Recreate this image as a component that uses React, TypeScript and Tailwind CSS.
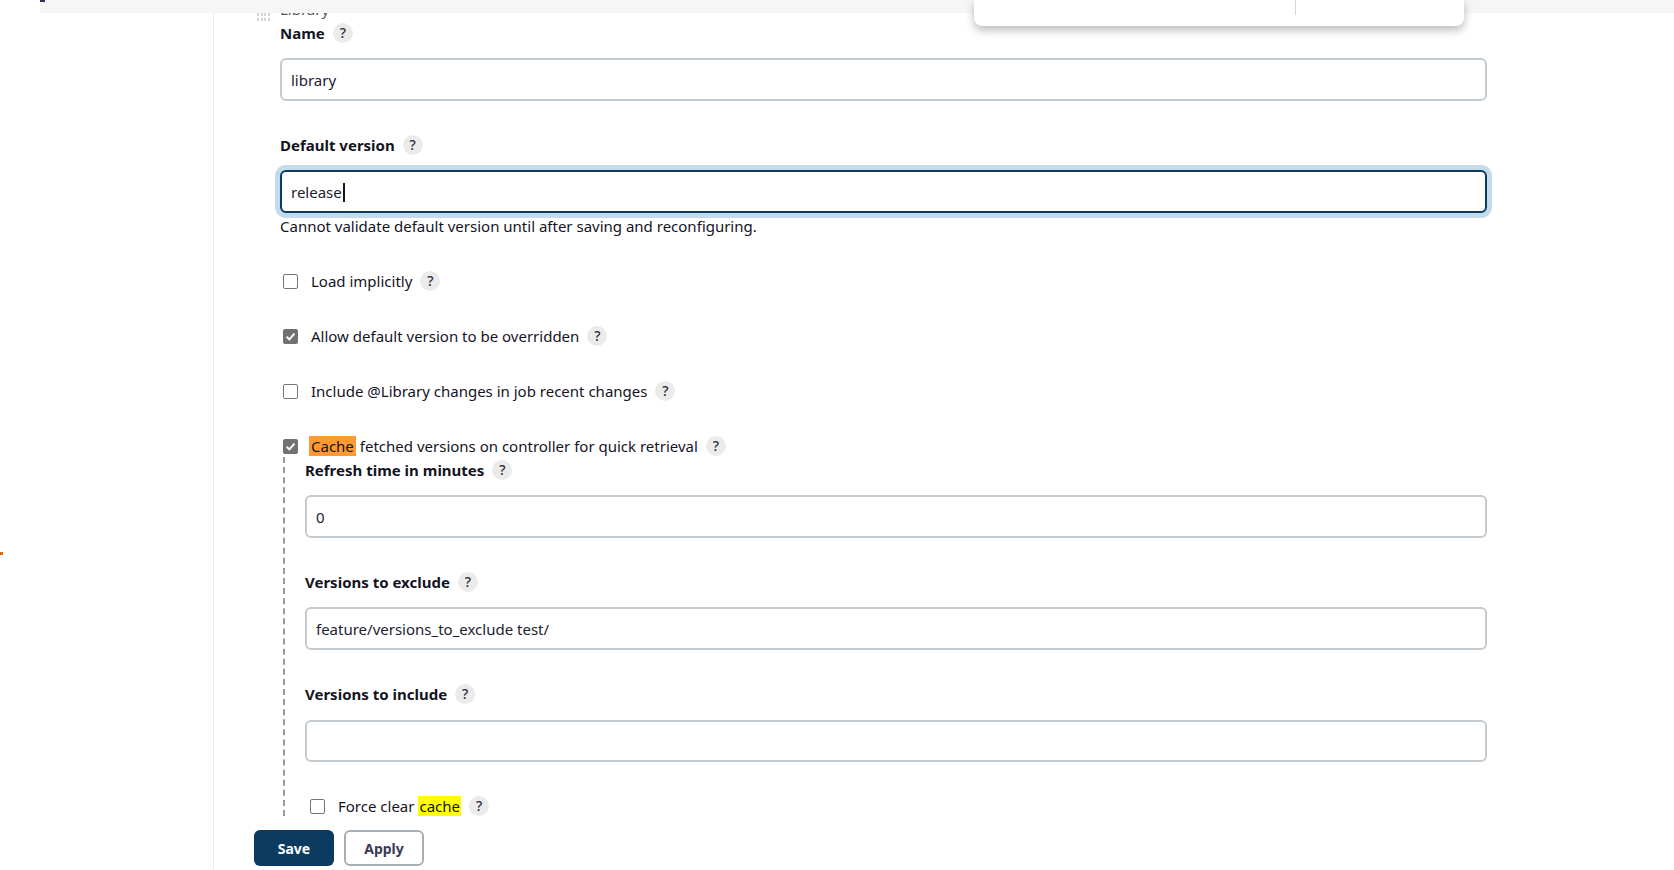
import { ReactNode } from "react";

function Help() {
    return (
        <span className="ml-[8px] inline-flex h-[20px] w-[20px] shrink-0 items-center justify-center rounded-full bg-[#ebebeb] text-[14px] font-medium leading-none text-[#2b2b3a]">
            ?
        </span>
    );
}

function Label({ children }: { children: ReactNode }) {
    return (
        <div className="flex h-[20px] items-center text-[15px] font-bold leading-[20px] text-[#14141f]">
            {children}
            <Help />
        </div>
    );
}

function TextInput({ value, height = "h-[43px]" }: { value: string; height?: string }) {
    return (
        <div
            className={`flex ${height} w-full items-center rounded-[6px] border-2 border-[#c3cbd0] bg-white px-[9px] pt-[2px] text-[15px] text-[#222230]`}
        >
            {value}
        </div>
    );
}

function Checkbox({ checked }: { checked?: boolean }) {
    if (checked) {
        return (
            <span className="flex h-[15px] w-[15px] shrink-0 items-center justify-center rounded-[2px] bg-[#717171]">
                <svg width="11" height="11" viewBox="0 0 10 10">
                    <path d="M1.5 5.2 L4 7.6 L8.6 2.4" fill="none" stroke="white" strokeWidth="1.8" />
                </svg>
            </span>
        );
    }
    return <span className="h-[15px] w-[15px] shrink-0 rounded-[2px] border-[1.5px] border-[#767676] bg-white" />;
}

function CheckRow({ checked, children }: { checked?: boolean; children: ReactNode }) {
    return (
        <div className="flex h-[20px] items-center text-[15px] leading-[20px] text-[#14141f]">
            <Checkbox checked={checked} />
            <span className="ml-[13px] flex items-center">{children}</span>
            <Help />
        </div>
    );
}

export default function App() {
    return (
        <div
            className="relative h-[870px] w-full overflow-hidden bg-white"
            style={{ fontFamily: '"Noto Sans", "Open Sans", sans-serif' }}
        >
            {/* sticky header strip */}
            <div className="absolute left-[40px] right-0 top-0 z-10 h-[13px] bg-[#f6f6f6]">
                <div className="h-[2px] w-[5px] bg-[#3b2f5a]" />
            </div>

            {/* floating menu that is scrolled mostly out of view */}
            <div className="absolute left-[974px] top-0 z-20 flex h-[26px] w-[490px] rounded-b-[8px] bg-white shadow-[0_4px_10px_rgba(0,0,0,0.28)]">
                <div className="flex-1" />
                <div className="h-[15px] w-px bg-[#d6d6d6]" />
                <div className="w-[168px]" />
            </div>

            <div className="flex h-full">
                <div className="relative h-full w-[214px] shrink-0 border-r border-[#ededed]">
                    <div className="absolute left-0 top-[552px] h-[3px] w-[3px] bg-[#e06a10]" />
                </div>

                <div className="flex-1 pl-[40px] pr-[187px]">
                    <div className="pl-[26px]">
                        <div className="-mt-[1px] flex h-[20px] items-start">
                            <span className="-ml-[23px] mr-[10px] mt-[14px] grid h-[8px] w-[13px] grid-cols-4 gap-px">
                                {Array.from({ length: 8 }).map((_, i) => (
                                    <span key={i} className="h-[3px] w-[2px] bg-[#d4d4d4]" />
                                ))}
                            </span>
                            <span className="text-[15px] leading-[20px] text-[#555]">Library</span>
                        </div>

                        <div className="mt-[4px]">
                            <Label>Name</Label>
                        </div>
                        <div className="mt-[15px]">
                            <TextInput value="library" />
                        </div>

                        <div className="mt-[34px]">
                            <Label>Default version</Label>
                        </div>
                        <div className="mt-[15px] flex h-[43px] w-full items-center rounded-[6px] border-2 border-[#0b3b60] bg-white px-[9px] pt-[2px] text-[15px] text-[#222230] shadow-[0_0_0_5px_#c3dbea]">
                            release
                            <span className="ml-px h-[19px] w-[2px] bg-[#14141f]" />
                        </div>
                        <div className="mt-[3px] h-[20px] text-[15px] leading-[20px] text-[#14141f]">
                            Cannot validate default version until after saving and reconfiguring.
                        </div>

                        <div className="ml-[3px] mt-[35px] flex flex-col gap-[35px]">
                            <CheckRow>Load implicitly</CheckRow>
                            <CheckRow checked>Allow default version to be overridden</CheckRow>
                            <CheckRow>Include @Library changes in job recent changes</CheckRow>
                            <CheckRow checked>
                                <span className="-ml-[2px] bg-[#ff9933] px-[2px]">Cache</span>
                                <span className="ml-[4px]">fetched versions on controller for quick retrieval</span>
                            </CheckRow>
                        </div>

                        <div className="ml-[3px] mt-[1px] border-l-2 border-dashed border-[#9a9a9a] pl-[20px] pt-[3px]">
                            <Label>Refresh time in minutes</Label>
                            <div className="mt-[15px]">
                                <TextInput value="0" />
                            </div>
                            <div className="mt-[34px]">
                                <Label>Versions to exclude</Label>
                            </div>
                            <div className="mt-[15px]">
                                <TextInput value="feature/versions_to_exclude test/" />
                            </div>
                            <div className="mt-[34px]">
                                <Label>Versions to include</Label>
                            </div>
                            <div className="mt-[16px]">
                                <TextInput value="" height="h-[42px]" />
                            </div>
                            <div className="ml-[5px] mt-[34px]">
                                <CheckRow>
                                    Force clear
                                    <span className="ml-[4px] bg-[#ffff00] px-[1px]">cache</span>
                                </CheckRow>
                            </div>
                        </div>
                    </div>

                    <div className="mt-[14px] flex gap-[10px]">
                        <button className="flex h-[36px] w-[80px] items-center justify-center rounded-[6px] bg-[#0b3b60] text-[14px] font-bold text-white">
                            Save
                        </button>
                        <button className="flex h-[36px] w-[80px] items-center justify-center rounded-[6px] border-2 border-[#a7aeb4] bg-white text-[14px] font-bold text-[#3c3a55]">
                            Apply
                        </button>
                    </div>
                </div>
            </div>
        </div>
    );
}
